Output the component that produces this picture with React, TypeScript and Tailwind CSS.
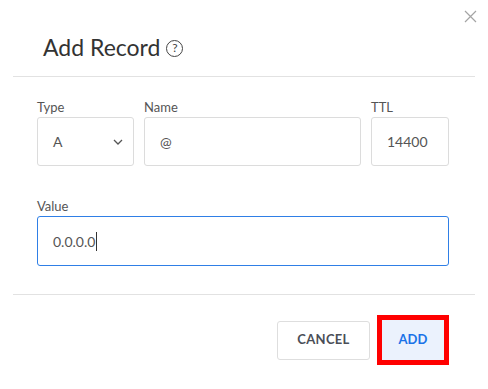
import React from "react";

export default function App() {
  return (
    <div
      className="relative w-[488px] h-[389px] bg-white text-[#4b4f56]"
      style={{ fontFamily: "Lato, 'Noto Sans', sans-serif" }}
    >
      {/* close */}
      <button className="absolute left-[463px] top-[9px] w-[15px] h-[15px] text-[#a4a4a4]">
        <svg viewBox="0 0 15 15" width="15" height="15" fill="none" stroke="currentColor" strokeWidth="1.2">
          <path d="M2 2L13 13M13 2L2 13" />
        </svg>
      </button>

      {/* header */}
      <div className="pl-[43px] pt-[32px] h-[76px] flex items-start">
        <h2 className="text-[23px] leading-[30px] text-[#333] flex items-center gap-[6px]">
          Add Record
          <span className="w-[17px] h-[17px] rounded-full border border-[#444] flex items-center justify-center text-[12px] leading-none text-[#444] mt-[2px]">
            ?
          </span>
        </h2>
      </div>
      <div className="mx-[13px] border-t border-[#e2e2e2]" />

      {/* form */}
      <div className="px-[37px] pt-[21px]">
        <div className="flex gap-[10px]">
          <div className="flex flex-col w-[97px]">
            <label className="text-[13px] leading-[18px] mb-[1px] text-[#555]">Type</label>
            <div className="h-[49px] border border-[#dcdcdc] rounded-[3px] flex items-center justify-between pl-[15px] pr-[10px] text-[14px] text-[#555]">
              <span>A</span>
              <svg width="10" height="6" viewBox="0 0 10 6" fill="none" stroke="#555" strokeWidth="1.3">
                <path d="M1 1l4 4 4-4" />
              </svg>
            </div>
          </div>
          <div className="flex flex-col w-[217px]">
            <label className="text-[13px] leading-[18px] mb-[1px] text-[#555]">Name</label>
            <div className="h-[49px] border border-[#dcdcdc] rounded-[3px] flex items-center pl-[15px] text-[14px] text-[#555]">
              @
            </div>
          </div>
          <div className="flex flex-col w-[78px]">
            <label className="text-[13px] leading-[18px] mb-[1px] text-[#555]">TTL</label>
            <div className="h-[49px] border border-[#dcdcdc] rounded-[3px] flex items-center pl-[15px] text-[14px] text-[#555]">
              14400
            </div>
          </div>
        </div>

        <div className="flex flex-col mt-[31px] w-[412px]">
          <label className="text-[13px] leading-[18px] mb-[1px] text-[#555]">Value</label>
          <div className="h-[50px] border border-[#2f7fe6] rounded-[3px] flex items-center pl-[15px] text-[14px] text-[#555]">
            0.0.0.0
            <span className="inline-block w-[1px] h-[19px] bg-[#333] ml-[1px]" />
          </div>
        </div>
      </div>

      <div className="mx-[13px] mt-[28px] border-t border-[#e2e2e2]" />

      {/* footer */}
      <div className="flex justify-end items-center gap-[7px] pr-[39px] pt-[20px]">
        <button className="w-[93px] h-[39px] border border-[#dedede] rounded-[3px] text-[13px] font-bold tracking-[0.3px] text-[#4a4e57]">
          CANCEL
        </button>
        <div className="w-[72px] h-[50px] border-[5px] border-[#ff0000] bg-[#ebf2fd] flex items-center justify-center">
          <span className="text-[13px] font-bold text-[#1a73e8]">ADD</span>
        </div>
      </div>
    </div>
  );
}
